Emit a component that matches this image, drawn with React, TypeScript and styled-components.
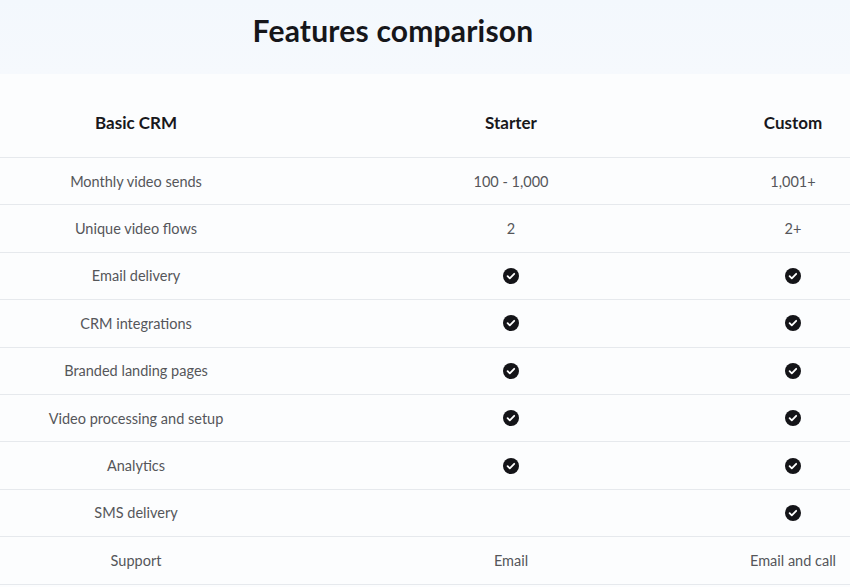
import React from "react";
import styled, { createGlobalStyle } from "styled-components";

const Global = createGlobalStyle`
  body { margin: 0; background: #fcfdfe; font-family: Lato, "Open Sans", sans-serif; overflow: hidden; }
`;
const Header = styled.div`
  height: 74px; display: flex; align-items: center; justify-content: center;
  background: linear-gradient(#f3f8fd, #f6f9fd);
  padding-right: 64px; padding-bottom: 14px; box-sizing: border-box;
`;
const Title = styled.h1`
  margin: 0; font-size: 30px; font-weight: 700; color: #16161a; letter-spacing: 0.2px;
`;
const Table = styled.div`
  display: grid; grid-template-columns: 272px 478px 1fr; background: #fcfdfe;
`;
const Cell = styled.div<{ $head?: boolean; $last?: boolean }>`
  height: ${p => (p.$head ? 84 : 47.4)}px;
  display: flex; align-items: center; justify-content: center; white-space: nowrap;
  border-bottom: 1px solid #e6e9ed; box-sizing: border-box;
  padding-top: ${p => (p.$head ? 14 : 0)}px;
  padding-right: ${p => (p.$last ? 64 : 0)}px;
  font-size: ${p => (p.$head ? 17 : 14.5)}px;
  font-weight: ${p => (p.$head ? 700 : 400)};
  color: ${p => (p.$head ? "#18181c" : "#55565a")};
`;
const Row = styled.div`display: contents;`;
const Check = () => (
  <svg width="16" height="16" viewBox="0 0 16 16">
    <circle cx="8" cy="8" r="8" fill="#141418" />
    <path d="M4.6 8.2l2.2 2.2 4.4-4.6" stroke="#fff" strokeWidth="1.8" fill="none" strokeLinecap="round" strokeLinejoin="round" />
  </svg>
);
const C = "check";
const rows: [string, string, string][] = [
  ["Monthly video sends", "100 - 1,000", "1,001+"],
  ["Unique video flows", "2", "2+"],
  ["Email delivery", C, C],
  ["CRM integrations", C, C],
  ["Branded landing pages", C, C],
  ["Video processing and setup", C, C],
  ["Analytics", C, C],
  ["SMS delivery", "", C],
  ["Support", "Email", "Email and call"],
];
const v = (s: string) => (s === C ? <Check /> : s);

export default function App() {
  return (
    <>
      <Global />
      <Header><Title>Features comparison</Title></Header>
      <Table>
        <Cell $head>Basic CRM</Cell>
        <Cell $head>Starter</Cell>
        <Cell $head $last>Custom</Cell>
        {rows.map(r => (
          <Row key={r[0]}>
            <Cell>{r[0]}</Cell>
            <Cell>{v(r[1])}</Cell>
            <Cell $last>{v(r[2])}</Cell>
          </Row>
        ))}
      </Table>
    </>
  );
}
